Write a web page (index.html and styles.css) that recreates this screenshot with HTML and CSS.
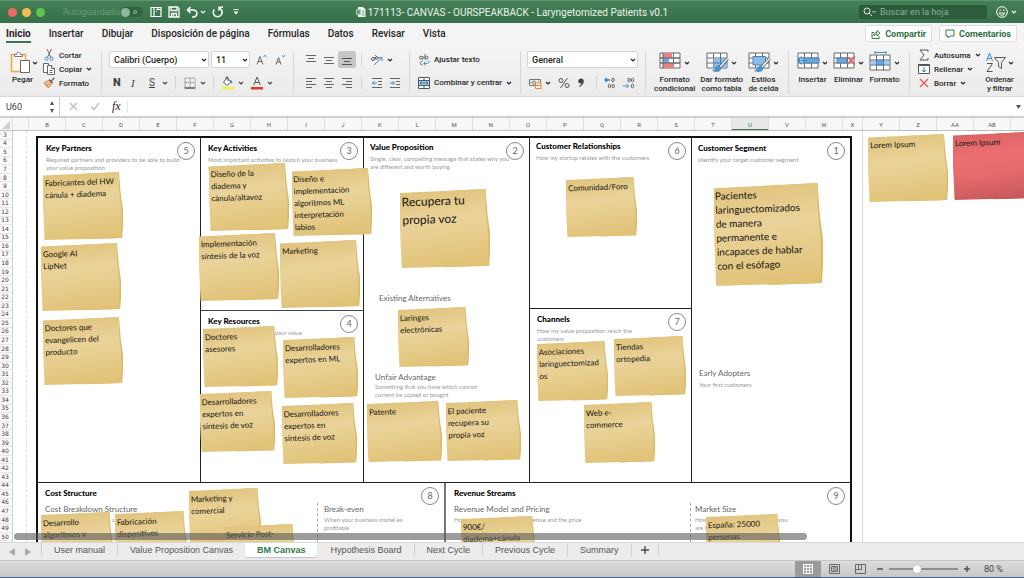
FILE: index.html
```html
<!DOCTYPE html>
<html lang="es">
<head>
<meta charset="utf-8">
<title>171113- CANVAS - OURSPEAKBACK - Laryngetomized Patients v0.1</title>
<link rel="stylesheet" href="styles.css">
</head>
<body>
<svg class="defs" aria-hidden="true">
  <symbol id="chev" viewBox="0 0 6 6"><path d="M1 2l2 2 2-2" fill="none" stroke="currentColor" stroke-width="1.2"/></symbol>
  <symbol id="grid" viewBox="0 0 24 18"><path d="M1 1h20v15H1zM1 6h20M1 11h20M7.500 1v15M14.500 1v15" fill="#fff" stroke="#6b6b6b" stroke-width="1"/></symbol>
  <symbol id="brush" viewBox="0 0 24 22"><path d="M21.500 6.500l-8 9" stroke="#555" stroke-width="3"/><path d="M21.500 6.500l-8 9" stroke="#fff" stroke-width="1.500"/><path d="M13.500 14c-3-.5-4 1-4.500 3-.3 1-1.500 1.500-2.500 1.500 3 2 8.500 1.500 8.500-2.500z" fill="#4a93cf" stroke="#2d75b3" stroke-width=".5"/></symbol>
</svg>
<div class="app">
  <header class="titlebar">
    <div class="tb-left">
      <span class="light red"></span><span class="light yellow"></span><span class="light green"></span>
      <span class="autosave">Autoguardado</span>
      <span class="toggle"><i></i><b>o</b></span>
      <button class="tb-btn" aria-label="Inicio"><svg width="12" height="12" viewBox="0 0 12 12" fill="none" stroke="#fff" stroke-width="1.200"><path d="M1 1.500h3v9H1zM4 1.500h7v9H4z"/><path d="M6 3.500h1.500M6 5.500h1M8 1.500v2h3"/></svg></button>
      <button class="tb-btn" aria-label="Guardar"><svg width="12" height="12" viewBox="0 0 12 12" fill="none" stroke="#fff" stroke-width="1.300"><path d="M1 1h8.500l1.500 1.500V11H1z"/><path d="M3 1v3.500h6V1M3.500 11V7.500h5V11M5.500 8.500v2"/></svg></button>
      <button class="tb-btn undo" aria-label="Deshacer"><svg width="12" height="12" viewBox="0 0 12 12" fill="none" stroke="#fff" stroke-width="1.500"><path d="M4.500 1L1.500 4l3 3M1.500 4h5.500c5 0 5 6 1 7H6"/></svg><svg class="chev"><use href="#chev"/></svg></button>
      <button class="tb-btn" aria-label="Rehacer"><svg width="12" height="12" viewBox="0 0 12 12" fill="none" stroke="#fff" stroke-width="1.500"><path d="M7 4.500V1.200h4M7.200 1.500L9.500 4c2 3-1 7-4 6.700C2 10.500 0 7 2.300 3.500"/></svg></button>
      <button class="tb-btn more" aria-label="Personalizar"><svg width="8" height="8" viewBox="0 0 8 8"><path d="M1.500 1.500h5" stroke="#fff"/><path d="M1.500 3.500h5L4 6.500z" fill="#fff"/></svg></button>
    </div>
    <div class="tb-title"><svg width="10" height="12" viewBox="0 0 10 12"><path d="M2 1h5l2.500 2.500V11H2z" fill="#f4f7f4"/><path d="M0 3h5v6H0z" fill="#a9cbb3"/><path d="M1.200 4.300l2.500 3.400M3.700 4.300L1.200 7.700" stroke="#2e6b42"/><path d="M6 5h2.500M6 7h2.500M6 9h2.500" stroke="#6e9e7d"/></svg><span>171113- CANVAS - OURSPEAKBACK - Laryngetomized Patients v0.1</span></div>
    <div class="tb-right">
      <label class="search"><svg width="14" height="10" viewBox="0 0 14 10" fill="none" stroke="#dfeae2"><circle cx="4" cy="4" r="3"/><path d="M6.200 6.200L9 9M9.500 4l1.500 1.500L12.500 4"/></svg><input type="text" placeholder="Buscar en la hoja" aria-label="Buscar en la hoja"></label>
      <button class="smiley" aria-label="Comentarios"><svg width="12" height="12" viewBox="0 0 12 12" fill="none" stroke="#fff"><circle cx="6" cy="6" r="5.300"/><path d="M3 7c1 3 5 3 6 0z"/><path d="M4.200 3.500v1.500M7.800 3.500v1.500"/></svg><svg class="chev"><use href="#chev"/></svg></button>
    </div>
  </header>

  <nav class="tabs">
    <a href="#" class="active">Inicio</a><a href="#">Insertar</a><a href="#">Dibujar</a><a href="#">Disposición de página</a><a href="#">Fórmulas</a><a href="#">Datos</a><a href="#">Revisar</a><a href="#">Vista</a>
    <div class="share">
      <button><svg width="10" height="10" viewBox="0 0 10 10" fill="none" stroke="#2f7a4b"><path d="M3 3.500H1v6h7V7M2.800 7c0-2.500 1.200-3.500 3.200-3.500V1.500L9 4.200 6 7V5c-1.500 0-2.500.5-3.200 2z"/></svg>Compartir</button>
      <button><svg width="10" height="10" viewBox="0 0 10 10" fill="none" stroke="#2f7a4b"><path d="M1 1h8v6H5L3 9V7H1z"/></svg>Comentarios</button>
    </div>
  </nav>

  <div class="ribbon">
    <section class="group clip">
      <button class="paste"><span class="paste-ico"><svg width="20" height="23" viewBox="0 0 20 23"><path d="M1.500 3.500h14v17h-14z" fill="#fdf6ea" stroke="#e9a94f" stroke-width="1.600"/><path d="M4.500 5.500v-2h2c0-3 4-3 4 0h2v2z" fill="#fff" stroke="#777"/><path d="M10.500 9.500h9v12h-9z" fill="#fff" stroke="#666"/></svg><svg class="chev"><use href="#chev"/></svg></span><span>Pegar</span></button>
      <div class="stack">
        <button><svg width="12" height="12" viewBox="0 0 12 12" fill="none"><path d="M4 0l4 8.500M8.500 0l-4 8.500" stroke="#666"/><circle cx="3.500" cy="9.700" r="1.600" stroke="#3c8dcc"/><circle cx="8.500" cy="9.700" r="1.600" stroke="#3c8dcc"/></svg>Cortar</button>
        <button><svg width="12" height="12" viewBox="0 0 12 12" fill="#fff" stroke="#666"><path d="M.5.500h5v9h-5z"/><path d="M4.500 2.500h4l3 3v6h-7z"/><path d="M8.500 2.500v3h3M6.500 7.500h3M6.500 9.500h3"/></svg>Copiar<svg class="chev"><use href="#chev"/></svg></button>
        <button><svg width="12" height="12" viewBox="0 0 12 12" fill="none"><path d="M11.500.8L8.300 4M6 2.500L9.800 6.300" stroke="#666" stroke-width="1.500"/><path d="M5.500 3.500L.8 6l4.700 5 3-4.500z" fill="#f6c9a0" stroke="#d9803a"/><path d="M3 7l2 2M4.500 6l2.500 2.500" stroke="#d9803a"/></svg>Formato</button>
      </div>
    </section>
    <section class="group rows font">
      <div class="row">
        <span class="sel face"><select aria-label="Fuente"><option>Calibri (Cuerpo)</option></select><svg class="chev"><use href="#chev"/></svg></span>
        <span class="sel size"><select aria-label="Tamaño"><option>11</option></select><svg class="chev"><use href="#chev"/></svg></span>
        <button class="ic grow" aria-label="Aumentar"><svg width="12" height="12" viewBox="0 0 12 12" fill="none"><path d="M1 10.500l3-8 3 8M2 7.500h4" stroke="#666"/><path d="M7.500 3L9 1.200 10.500 3" stroke="#3c8dcc"/></svg></button>
        <button class="ic grow" aria-label="Reducir"><svg width="12" height="12" viewBox="0 0 12 12" fill="none"><path d="M1 10.500l2.500-7 2.500 7M2 8h3" stroke="#666"/><path d="M7 1.200L8.500 3 10 1.200" stroke="#3c8dcc"/></svg></button>
      </div>
      <div class="row fmt">
        <button class="bold">N</button><button class="ital">I</button><button class="under"><u>S</u><svg class="chev"><use href="#chev"/></svg></button><i class="vr"></i>
        <button><svg width="12" height="12" viewBox="0 0 12 12" fill="none" stroke="#888"><path d="M1 1h10v9M1 1v9M6 1v10M1 5.500h10" stroke-dasharray="1.500 1"/><path d="M.5 11h11" stroke="#444" stroke-width="1.300"/></svg><svg class="chev"><use href="#chev"/></svg></button><i class="vr"></i>
        <button><svg width="12" height="14" viewBox="0 0 12 14" fill="none"><path d="M5 2L1.500 6 5 9.500 9 5.800z" fill="#fff" stroke="#555"/><path d="M4 3V1.500c0-1 2-1 2 0V5" stroke="#555"/><path d="M8 4c2 0 2.500 1.500 2.200 4L8.500 6z" fill="#3c8dcc"/><path d="M0 11h12v2.500H0z" fill="#f9ee3c"/></svg><svg class="chev"><use href="#chev"/></svg></button>
        <button><svg width="12" height="14" viewBox="0 0 12 14" fill="none"><path d="M2.700 9L6 1l3.300 8M4 6.500h4" stroke="#555"/><path d="M0 11h12v2.500H0z" fill="#e6352b"/></svg><svg class="chev"><use href="#chev"/></svg></button>
      </div>
    </section>
    <section class="group rows align">
      <div class="row">
        <button aria-label="Arriba"><svg width="12" height="12" viewBox="0 0 12 12" stroke="#666"><path d="M1 1.500h10M3 4.500h6M1 7.500h10"/></svg></button>
        <button aria-label="Centro"><svg width="12" height="12" viewBox="0 0 12 12" stroke="#666"><path d="M1 3.500h10M3 6.500h6M1 9.500h10"/></svg></button>
        <button class="on" aria-label="Abajo"><svg width="12" height="12" viewBox="0 0 12 12" stroke="#555"><path d="M1 4.500h10M3 7.500h6M1 10.500h10"/></svg></button>
        <i class="vr"></i>
        <button class="wide" aria-label="Orientación"><svg width="13" height="12" viewBox="0 0 13 12" fill="none"><circle cx="3" cy="5" r="1.500" stroke="#666"/><path d="M4 3l2 2.500M5 .8l3.500 4" stroke="#666"/><circle cx="6.700" cy="4" r="1.300" stroke="#666"/><path d="M4 11l7.500-7M8.500 3.500h3.500V7" stroke="#3c8dcc"/></svg><svg class="chev"><use href="#chev"/></svg></button>
      </div>
      <div class="row">
        <button aria-label="Izquierda"><svg width="12" height="12" viewBox="0 0 12 12" stroke="#666"><path d="M1 1.500h10M1 4.500h6M1 7.500h10M1 10.500h6"/></svg></button>
        <button aria-label="Centrar"><svg width="12" height="12" viewBox="0 0 12 12" stroke="#666"><path d="M1 1.500h10M3 4.500h6M1 7.500h10M3 10.500h6"/></svg></button>
        <button aria-label="Derecha"><svg width="12" height="12" viewBox="0 0 12 12" stroke="#666"><path d="M1 1.500h10M5 4.500h6M1 7.500h10M5 10.500h6"/></svg></button>
        <i class="vr"></i>
        <button aria-label="Disminuir sangría"><svg width="12" height="12" viewBox="0 0 12 12" fill="none" stroke="#666"><path d="M1 1.500h10M7 4.500h4M7 7.500h4M1 10.500h10"/><path d="M6 6H1.500M3.500 4l-2 2 2 2" stroke="#3c8dcc"/></svg></button>
        <button aria-label="Aumentar sangría"><svg width="12" height="12" viewBox="0 0 12 12" fill="none" stroke="#666"><path d="M1 1.500h10M7 4.500h4M7 7.500h4M1 10.500h10"/><path d="M1 6h4.500M3.500 4l2 2-2 2" stroke="#3c8dcc"/></svg></button>
      </div>
    </section>
    <section class="group rows wrap">
      <div class="row"><button><svg width="12" height="12" viewBox="0 0 12 12" fill="none" stroke="#666"><circle cx="3" cy="3.700" r="1.500"/><path d="M5 2v3.500M7 0v5.500M4.500 7.500c-3-.5-3 4 0 3.500"/><circle cx="8.500" cy="3.700" r="1.500"/><path d="M11 6.500c.5 3-1.500 3-5 3M7.500 7.500L5.800 9.500l1.700 2" stroke="#3c8dcc"/></svg>Ajustar texto</button></div>
      <div class="row"><button><svg width="12" height="12" viewBox="0 0 12 12" fill="none"><path d="M.5.500h11v11H.5z" fill="#fff" stroke="#555"/><path d="M.5 3.500h11M.5 8.500h11M6 .5v3M6 8.500v3" stroke="#555"/><path d="M1 4h10v4H1z" fill="#a9d0f0"/><path d="M2 6h8M3.500 4.500L2 6l1.500 1.500M8.500 4.500L10 6 8.500 7.500" stroke="#2573b5"/></svg>Combinar y centrar<svg class="chev"><use href="#chev"/></svg></button></div>
    </section>
    <section class="group rows num">
      <div class="row"><span class="sel general"><select aria-label="Formato de número"><option>General</option></select><svg class="chev"><use href="#chev"/></svg></span></div>
      <div class="row nums">
        <button><svg width="13" height="12" viewBox="0 0 13 12" fill="none"><path d="M.5 2.500h11v6H.5z" stroke="#777"/><circle cx="5" cy="5.500" r="1.500" stroke="#777"/><path d="M2 4.500v2M9.500 3.500v1" stroke="#777"/><path d="M6.500 6h5.500v5.500H6.500zM6.500 8.500h5.500" fill="#fff3e6" stroke="#e08a3c"/></svg><svg class="chev"><use href="#chev"/></svg></button>
        <button><svg width="12" height="12" viewBox="0 0 12 12" fill="none" stroke="#555"><circle cx="3" cy="3.500" r="2"/><circle cx="9" cy="8.500" r="2"/><path d="M9.500 1l-7 10"/></svg></button>
        <button><svg width="8" height="12" viewBox="0 0 8 12"><path d="M4 1.500c4 0 4 6-1.500 8.500l-.5-.8C4 8 4.500 7.200 4.300 6.500 0 7 .500 1.500 4 1.500z" fill="#444"/></svg></button>
        <i class="vr"></i>
        <button><svg width="12" height="12" viewBox="0 0 12 12" fill="none"><path d="M6 3H1M3 1L1 3l2 2" stroke="#2f80c4" stroke-width="1.300"/><g stroke="#666"><ellipse cx="9" cy="3" rx="1.200" ry="1.800"/><ellipse cx="5.500" cy="9" rx="1.200" ry="1.800"/><ellipse cx="9.200" cy="9" rx="1.200" ry="1.800"/></g></svg></button>
        <button><svg width="12" height="12" viewBox="0 0 12 12" fill="none"><path d="M0 9h5M3.500 7l2 2-2 2" stroke="#3c8dcc"/><g stroke="#666"><ellipse cx="6" cy="3" rx="1.200" ry="1.800"/><ellipse cx="9.500" cy="3" rx="1.200" ry="1.800"/><ellipse cx="9.500" cy="9" rx="1.200" ry="1.800"/></g></svg></button>
      </div>
    </section>
    <section class="group bigs styles">
      <button class="big"><span><svg width="24" height="22" viewBox="0 0 24 22"><use href="#grid" width="24" height="18"/><path d="M4 1h9v5H4z" fill="#ef7f7f"/><path d="M4 6h6v5H4z" fill="#6ea8dc"/><path d="M4 11h11v5H4z" fill="#ef7f7f"/><path d="M4 1v15M1 6h20M1 11h20" stroke="#666"/></svg><svg class="chev"><use href="#chev"/></svg></span>Formato<br>condicional</button>
      <button class="big"><span><svg width="24" height="22" viewBox="0 0 24 22"><use href="#grid" width="24" height="18"/><path d="M7.500 6H21v10H7.500z" fill="#8dbde8"/><path d="M7.500 11H21M14.500 6v10" stroke="#4b83b5"/><use href="#brush" width="24" height="22"/></svg><svg class="chev"><use href="#chev"/></svg></span>Dar formato<br>como tabla</button>
      <button class="big"><span><svg width="24" height="22" viewBox="0 0 24 22"><use href="#grid" width="24" height="18"/><path d="M5 4.500h12.500v8.500H5z" fill="#8dbde8" stroke="#4b83b5"/><use href="#brush" width="24" height="22"/></svg><svg class="chev"><use href="#chev"/></svg></span>Estilos<br>de celda</button>
    </section>
    <section class="group bigs cells">
      <button class="big"><span><svg width="24" height="22" viewBox="0 0 24 22"><use href="#grid" width="24" height="18"/><path d="M6 6h16v5H6z" fill="#6aa7de" stroke="#4b83b5"/><path d="M10 8.500H1M5 4.500l-4 4 4 4" fill="none" stroke="#3c8dcc" stroke-width="1.300"/></svg><svg class="chev"><use href="#chev"/></svg></span>Insertar</button>
      <button class="big"><span><svg width="24" height="22" viewBox="0 0 24 22"><use href="#grid" width="24" height="18"/><path d="M4 6h10v5H4z" fill="#6aa7de" stroke="#4b83b5"/><path d="M14 4.500l8 8M22 4.500l-8 8" stroke="#e2574f" stroke-width="1.400"/></svg><svg class="chev"><use href="#chev"/></svg></span>Eliminar</button>
      <button class="big"><span><svg class="tall" width="24" height="24" viewBox="0 -3 24 24"><use href="#grid" width="24" height="18"/><path d="M2 6h18v5H2z" fill="#6aa7de" opacity=".6"/><path d="M7.500 6h7v5h-7z" fill="#6aa7de" stroke="#4b83b5"/><path d="M6 -1.500h11M6 -3v3M17 -3v3" stroke="#3c8dcc"/></svg><svg class="chev"><use href="#chev"/></svg></span>Formato</button>
    </section>
    <section class="group edit">
      <div class="stack">
        <button><svg width="12" height="12" viewBox="0 0 12 12" fill="none" stroke="#555"><path d="M10 3V1H2l4 5-4 5h8V9"/></svg>Autosuma<svg class="chev"><use href="#chev"/></svg></button>
        <button><svg width="12" height="12" viewBox="0 0 12 12" fill="none"><path d="M.5 1.500h11v9H.5z" fill="#fff" stroke="#555"/><path d="M.5 2.500h11" stroke="#555"/><path d="M6 4v5M4 7l2 2 2-2" stroke="#2f80c4"/></svg>Rellenar<svg class="chev"><use href="#chev"/></svg></button>
        <button><svg width="12" height="12" viewBox="0 0 12 12"><path d="M2 2l8 8M10 2l-8 8" stroke="#e2574f" stroke-width="1.200"/></svg>Borrar<svg class="chev"><use href="#chev"/></svg></button>
      </div>
      <button class="big sort"><span><svg width="22" height="22" viewBox="0 0 22 22" fill="none"><path d="M1.500 9l3-8 3 8M2.500 6.500h4" stroke="#3c8dcc"/><path d="M2 11.500h5.500l-5.500 8h5.500" stroke="#555"/><path d="M9.500 5.500h11l-4 5v6l-3-2v-4z" stroke="#555"/></svg><svg class="chev"><use href="#chev"/></svg></span>Ordenar<br>y filtrar</button>
    </section>
  </div>

  <div class="formula">
    <div class="namebox"><input type="text" value="U60" aria-label="Cuadro de nombres"><svg width="6" height="12" viewBox="0 0 6 12" fill="#555"><path d="M3 0l2 4H1zM3 12l2-4H1z"/></svg></div>
    <button aria-label="Cancelar"><svg width="9" height="9" viewBox="0 0 9 9"><path d="M1 1l7 7M8 1L1 8" stroke="#c3c3c3" stroke-width="1.500"/></svg></button>
    <button aria-label="Aceptar"><svg width="10" height="9" viewBox="0 0 10 9" fill="none"><path d="M1 4.500l3 3L9 1" stroke="#c3c3c3" stroke-width="1.500"/></svg></button>
    <button class="fx">fx</button>
    <input class="entry" type="text" aria-label="Barra de fórmulas">
    <svg width="6" height="6" viewBox="0 0 6 6"><path d="M0 1h5L2.500 5z" fill="#555"/></svg>
  </div>

  <div class="cols"><span class="corner"><svg width="10" height="11" viewBox="0 0 10 11"><path d="M9 2v8H1z" fill="#d0d0d0"/></svg></span><span class="a"></span><span>B</span><span>C</span><span>D</span><span>E</span><span>F</span><span>G</span><span>H</span><span>I</span><span>J</span><span>K</span><span>L</span><span>M</span><span>N</span><span>O</span><span>P</span><span>Q</span><span>R</span><span>S</span><span>T</span><span class="cur">U</span><span>V</span><span>W</span><span class="x">X</span><span>Y</span><span>Z</span><span>AA</span><span>AB</span><span></span></div>

  <main class="work">
    <div class="rownums"><span>3</span><span>4</span><span>5</span><span>6</span><span>7</span><span>8</span><span>9</span><span>10</span><span>11</span><span>12</span><span>13</span><span>14</span><span>15</span><span>16</span><span>17</span><span>18</span><span>19</span><span>20</span><span>21</span><span>22</span><span>23</span><span>24</span><span>25</span><span>26</span><span>27</span><span>28</span><span>29</span><span>30</span><span>31</span><span>32</span><span>33</span><span>34</span><span>35</span><span>36</span><span>37</span><span>38</span><span>39</span><span>40</span><span>41</span><span>42</span><span>43</span><span>44</span><span>45</span><span>46</span><span>47</span><span>48</span><span>49</span><span>50</span><span>51</span></div>
    <div class="sheet">
      <div class="printarea">
        <div class="board">
          <div class="top">
            <div class="col"><section class="cell"><h2>Key Partners</h2><p>Required partners and providers to be able to build<br>your value proposition</p><b class="no">5</b></section></div>
            <div class="col"><section class="cell ka"><h2>Key Activities</h2><p>Most important activities to launch your business<br>model</p><b class="no">3</b></section><section class="cell kr"><h2>Key Resources</h2><p>What you need to create your value</p><b class="no">4</b></section></div>
            <div class="col"><section class="cell vp"><h2>Value Proposition</h2><p>Single, clear, compelling message that states why you<br>are different and worth buying</p><b class="no">2</b>
              <div class="sub alt"><h3>Existing Alternatives</h3></div>
              <div class="sub unfair"><h3>Unfair Advantage</h3><p>Something that you have which cannot<br>current be copied or bought</p></div></section></div>
            <div class="col"><section class="cell cr"><h2>Customer Relationships</h2><p>How my startup relates with the customers</p><b class="no">6</b></section><section class="cell ch"><h2>Channels</h2><p>How my value proposition reach the<br>customers</p><b class="no">7</b></section></div>
            <div class="col"><section class="cell cs"><h2>Customer Segment</h2><p>Identify your target customer segment</p><b class="no">1</b>
              <div class="sub early"><h3>Early Adopters</h3><p>Your first customers</p></div></section></div>
          </div>
          <div class="bottom">
            <section class="cell cost"><h2>Cost Structure</h2><b class="no">8</b>
              <div class="halves"><div><h3>Cost Breakdown Structure</h3><p>List your costs to run the company</p></div><div class="dash"><h3>Break-even</h3><p>When your business model es<br>profitable</p></div></div></section>
            <section class="cell rev"><h2>Revenue Streams</h2><b class="no">9</b>
              <div class="halves"><div><h3>Revenue Model and Pricing</h3><p>How you will generate the revenue and the price</p></div><div class="dash"><h3>Market Size</h3><p>How big is the market segment you<br>are targeting</p></div></div></section>
          </div>
        </div>
      </div>

      <div class="note n1"><p>Fabricantes del HW<br>cánula + diadema</p></div>
      <div class="note n2"><p>Google AI<br>LipNet</p></div>
      <div class="note n3"><p>Doctores que<br>evangelicen del<br>producto</p></div>
      <div class="note n4"><p>Diseño de la<br>diadema y<br>cánula/altavoz</p></div>
      <div class="note n5"><p>Diseño e<br>implementación<br>algoritmos ML<br>interpretación<br>labios</p></div>
      <div class="note n6"><p>Implementación<br>síntesis de la voz</p></div>
      <div class="note n7"><p>Marketing</p></div>
      <div class="note n8 large"><p>Recupera tu<br>propia voz</p></div>
      <div class="note n9"><p>Comunidad/Foro</p></div>
      <div class="note n10 medium"><p>Pacientes<br>laringuectomizados<br>de manera<br>permanente e<br>incapaces de hablar<br>con el esófago</p></div>
      <div class="note n11"><p>Lorem Ipsum</p></div>
      <div class="note n12 coral"><p>Lorem Ipsum</p></div>
      <div class="note n13"><p>Laringes<br>electrónicas</p></div>
      <div class="note n14"><p>Doctores<br>asesores</p></div>
      <div class="note n15"><p>Desarrolladores<br>expertos en ML</p></div>
      <div class="note n16"><p>Desarrolladores<br>expertos en<br>síntesis de voz</p></div>
      <div class="note n17"><p>Desarrolladores<br>expertos en<br>síntesis de voz</p></div>
      <div class="note n18"><p>Patente</p></div>
      <div class="note n19"><p>El paciente<br>recupera su<br>propia voz</p></div>
      <div class="note n20"><p>Asociaciones<br>laringuectomizad<br>os</p></div>
      <div class="note n21"><p>Tiendas<br>ortopedia</p></div>
      <div class="note n22"><p>Web e-<br>commerce</p></div>
      <div class="note n23"><p>Desarrollo<br>algoritmos y</p></div>
      <div class="note n24"><p>Fabricación<br>dispositivos</p></div>
      <div class="note n25"><p>Marketing y<br>comercial</p></div>
      <div class="note n26"><p>Servicio Post-</p></div>
      <div class="note n27"><p>900€/<br>diadema+cánula</p></div>
      <div class="note n28"><p>España: 25000<br>personas</p></div>
      <div class="scroll"></div>
    </div>
  </main>

  <nav class="sheets">
    <span class="arrows"><svg width="6" height="8" viewBox="0 0 6 8"><path d="M6 0v8L0 4z" fill="#aaa"/></svg><svg width="6" height="8" viewBox="0 0 6 8"><path d="M0 0v8l6-4z" fill="#aaa"/></svg></span>
    <button>User manual</button><button>Value Proposition Canvas</button><button class="active">BM Canvas</button><button>Hypothesis Board</button><button>Next Cycle</button><button>Previous Cycle</button><button>Summary</button><button class="add" aria-label="Agregar hoja"><svg width="8" height="8" viewBox="0 0 8 8"><path d="M4 0v8M0 4h8" stroke="#444" stroke-width="1.300"/></svg></button>
  </nav>
  <footer class="status">
    <button class="on" aria-label="Normal"><svg width="10" height="10" viewBox="0 0 10 10" fill="none" stroke="#fff"><path d="M.5.500h9v9h-9zM3.500.500v9M6.500.500v9M.5 3.500h9M.5 6.500h9"/></svg></button>
    <button aria-label="Diseño de página"><svg width="11" height="10" viewBox="0 0 11 10" fill="none" stroke="#666"><path d="M.5.500h10v9H.5zM2.500 2.500h6v5h-6zM3.500 4h4M3.500 6h4"/></svg></button>
    <button aria-label="Salto de página"><svg width="11" height="10" viewBox="0 0 11 10" fill="none" stroke="#666"><path d="M.5.500h10v9H.5zM3.500.500v5M6.500.500v5M.5 5.500h6"/></svg></button>
    <svg class="minus" width="6" height="8" viewBox="0 0 6 8"><path d="M0 4h6" stroke="#555" stroke-width="1.500"/></svg>
    <input type="range" min="0" max="100" value="40" aria-label="Zoom">
    <svg class="plus" width="6" height="8" viewBox="0 0 6 8"><path d="M0 4h6M3 1v6" stroke="#555" stroke-width="1.500"/></svg>
    <span class="pct">80 %</span>
  </footer>
</div>
</body>
</html>
```
FILE: styles.css
```css
* { box-sizing: border-box; }
html, body { margin: 0; height: 100%; }
body { font-family: Roboto, "Liberation Sans", sans-serif; color: #262626; background: #3c5f8c; overflow: hidden; }
h2, h3, p { margin: 0; }
button { font: inherit; color: inherit; background: none; border: 0; padding: 0; margin: 0; display: flex; align-items: center; }
svg { display: block; flex: none; }
a { color: inherit; text-decoration: none; }
.defs { position: absolute; width: 0; height: 0; }
.chev { width: 6px; height: 6px; }
.app { display: flex; flex-direction: column; height: calc(100vh - 1px); background: #fff; }

/* title bar */
.titlebar { flex: none; height: 23px; display: grid; grid-template-columns: 1fr auto 1fr; align-items: center; background: linear-gradient(#447f56, #36704a); border-top: 1px solid #5d9470; color: #fff; }
.tb-left { display: flex; align-items: center; padding-left: 8px; }
.light { width: 9px; height: 9px; border-radius: 50%; margin-right: 5px; }
.red { background: #ee6a5f; }
.yellow { background: #f5bd4f; }
.green { background: #61c455; }
.autosave { font-size: 9px; color: #6a9a78; margin-left: 13px; width: 58px; }
.toggle { width: 22px; height: 10px; border-radius: 5px; background: #2f6341; display: flex; align-items: center; gap: 3px; font-size: 7px; color: #a6c4af; margin-right: 7px; }
.toggle i { width: 9px; height: 9px; border-radius: 50%; background: #92b59d; }
.toggle b { font-weight: 500; line-height: 8px; }
.tb-btn { margin-right: 6px; gap: 2px; }
.tb-btn.more { margin-left: 2px; }
.tb-title { display: flex; align-items: center; gap: 2px; font-size: 10px; color: #e9f1eb; white-space: nowrap; }
.tb-right { display: flex; align-items: center; justify-content: flex-end; padding-right: 7px; gap: 9px; }
.search { display: flex; align-items: center; gap: 3px; width: 128px; height: 14px; padding-left: 4px; border-radius: 2px; background: #2c5c3c; }
.search input { flex: 1; min-width: 0; border: 0; padding: 0; background: none; font: 9px Roboto, sans-serif; color: #fff; }
.search input::placeholder { color: #8fb19a; opacity: 1; }
.smiley { gap: 3px; }

/* ribbon tabs */
.tabs { flex: none; height: 24px; display: flex; align-items: stretch; gap: 18px; padding: 2px 7px 2px 6px; background: #f5f4f4; font-size: 10px; font-weight: 500; }
.tabs a { display: flex; align-items: center; height: 18px; border-bottom: 2px solid transparent; white-space: nowrap; }
.tabs a.active { font-weight: 700; border-color: #3a7650; }
.share { margin-left: auto; display: flex; gap: 7px; height: 17px; }
.share button { gap: 4px; padding: 0 5px; background: #fff; border: 1px solid #dedede; border-radius: 2px; font-size: 9px; font-weight: 700; color: #2f7046; }

/* ribbon */
.ribbon { flex: none; height: 50px; display: grid; grid-template-columns: 102px 192px 116px 111px 125px 143px 121px 1fr; background: linear-gradient(#f5f4f4, #ebebeb); border-bottom: 1px solid #d8d8d8; font-size: 8px; font-weight: 500; white-space: nowrap; }
.group { position: relative; display: flex; }
.group:not(:last-child)::after { content: ""; position: absolute; right: 0; top: 4px; bottom: 3px; width: 1px; background: #d6d6d6; }
.rows { flex-direction: column; gap: 6px; padding-top: 4px; }
.row { display: flex; align-items: center; height: 17px; }
.vr { width: 1px; height: 13px; background: #d2d2d2; }
.stack { display: flex; flex-direction: column; }
.stack button { height: 14px; gap: 4px; }
.clip { padding: 1px 0 0 10px; gap: 5px; }
.paste { flex-direction: column; align-items: flex-start; width: 28px; padding-top: 3px; gap: 1px; }
.paste > span:last-child { margin-left: 2px; }
.paste-ico { display: flex; align-items: center; gap: 2px; }
.sel { position: relative; display: block; height: 17px; }
.sel select { appearance: none; width: 100%; height: 17px; padding: 0 4px; border: 1px solid #d4d4d4; border-radius: 2px; background: #fff; font: 500 9px Roboto, sans-serif; color: #262626; }
.sel .chev { position: absolute; right: 2px; top: 6px; }
.font { padding-left: 7px; }
.face { width: 100px; }
.size { width: 39px; margin: 0 6px 0 2px; }
.grow { margin-right: 7px; }
.fmt { padding-left: 4px; color: #444; }
.fmt button { gap: 4px; }
.bold { font-size: 11px; font-weight: 900; width: 18px; }
.ital { font-family: "Liberation Serif", serif; font-style: italic; font-size: 11px; width: 18px; }
.under { font-size: 10px; font-weight: 400; width: 26px; }
.under .chev { margin-left: 3px; }
.fmt .vr { margin-right: 8px; }
.fmt button:nth-of-type(n+4) { margin-right: 7px; }
.align { padding-left: 8px; }
.align button { width: 18px; height: 17px; justify-content: center; }
.align .on { background: #c6c6c6; border-radius: 2px; }
.align .vr { margin: 0 6px 0 5px; }
.align .wide { width: 26px; gap: 4px; }
.wrap { padding-left: 8px; }
.wrap button { gap: 4px; }
.num { padding-left: 6px; }
.general { width: 111px; }
.nums { padding-left: 2px; gap: 7px; }
.nums button { gap: 3px; }
.nums .vr { margin-left: 4px; }
.bigs { padding-top: 4px; }
.big { flex-direction: column; line-height: 9px; text-align: center; }
.big span { display: flex; align-items: center; gap: 1px; height: 24px; }
.styles { justify-content: space-between; padding-left: 8px; padding-right: 10px; }
.cells { gap: 5px; padding-left: 8px; }
.edit { justify-content: space-between; padding: 1px 10px 0 8px; }
.sort { padding-top: 3px; }

/* formula bar */
.formula { flex: none; height: 21px; display: flex; align-items: center; background: #fff; border-bottom: 2px solid #cfcfcf; padding-right: 2px; }
.namebox { width: 60px; height: 19px; display: flex; align-items: center; border-right: 1px solid #cbcbcb; padding: 0 4px 0 6px; margin-right: 9px; }
.namebox input { flex: 1; min-width: 0; border: 0; padding: 0; font: 9px Roboto, sans-serif; color: #444; }
.formula button { margin-right: 12px; }
.formula .fx { font: italic 12px "Liberation Serif", serif; margin: 0 6px 0 0; }
.entry { flex: 1; border: 0; border-left: 1px solid #e6e6e6; height: 12px; padding: 0; }

/* column headings */
.cols { flex: none; height: 13px; display: flex; overflow: hidden; background: #f8f8f8; border-bottom: 1px solid #bdbdbd; font-size: 6px; color: #555; }
.cols span { flex: none; width: 37px; border-right: 1px solid #dedede; display: flex; align-items: center; justify-content: center; }
.cols .corner { width: 13px; }
.cols .a { width: 16px; }
.cols .x { width: 20px; }
.cols .cur { background: #e8e8e8; color: #2f7046; box-shadow: inset 0 -1px #3a7650; }

/* work area */
.work { flex: 1; min-height: 0; display: flex; overflow: hidden; }
.rownums { flex: none; width: 13px; height: 419px; display: grid; grid-auto-rows: 1fr; background: #fafafa; border-right: 1px solid #cfcfcf; font: 6px "DejaVu Sans", sans-serif; color: #444; text-align: center; }
.rownums span { display: flex; align-items: center; justify-content: center; padding-right: 2px; border-bottom: 1px solid #e6e6e6; overflow: hidden; line-height: 6px; }
.sheet { flex: 1; min-width: 0; position: relative; overflow: hidden; font-family: Lato, "Open Sans", sans-serif; }
.printarea { width: 850px; height: 100%; padding: 5px 0 0 10px; border-right: 1px solid #dcdcdc; }
.printarea::before { content: ""; position: absolute; left: 13px; top: 0; bottom: 0; border-left: 1px dashed #dedede; }
.board { width: 816px; margin-left: 13px; border: 2px solid #111; background: #fff; }
.top { display: grid; grid-template-columns: 162px 163px 166px 162px 1fr; height: 344px; }
.col { display: flex; flex-direction: column; }
.col + .col { border-left: 1px solid #222; }
.cell { position: relative; flex: 1; padding: 4px 8px; }
.cell h2 { font-size: 8px; line-height: 12px; font-weight: 900; color: #000; white-space: nowrap; }
.cell p { font-size: 6px; line-height: 8px; color: #999; white-space: nowrap; margin-top: 2px; }
.cell h3 { font-size: 8px; line-height: 12px; font-weight: 400; color: #666; white-space: nowrap; }
.no { position: absolute; right: 5px; top: 4px; width: 18px; height: 18px; border: 1px solid #888; border-radius: 50%; font-size: 9px; line-height: 16px; font-weight: 400; color: #666; text-align: center; }
.ka { flex: none; height: 172px; padding-left: 7px; }
.kr { border-top: 1px solid #444; padding-left: 7px; }
.vp { padding: 3px 6px; }
.cr { flex: none; height: 170px; padding: 2px 6px; }
.ch { border-top: 1px solid #222; padding-left: 7px; }
.cs { padding-left: 6px; }
.sub { position: absolute; }
.alt { left: 15px; top: 154px; }
.unfair { left: 11px; top: 233px; }
.unfair p { margin-top: 0; }
.early { left: 7px; top: 229px; }
.bottom { display: grid; grid-template-columns: 406px 1fr; height: 84px; border-top: 1px solid #222; }
.cost { padding-left: 7px; }
.rev { border-left: 2px solid #777; padding-left: 8px; }
.halves { display: grid; grid-template-columns: 272px 1fr; margin-top: 4px; }
.rev .halves { grid-template-columns: 236px 1fr; }
.cell .halves p { margin-top: 1px; }
.dash { border-left: 1px dashed #aaa; height: 50px; padding-left: 6px; }
.rev .dash { padding-left: 4px; }

/* sticky notes */
.note { position: absolute; width: 80px; height: 68px; padding: 4px 2px; }
.note::before, .note::after { content: ""; position: absolute; inset: 0; }
.note::before { background: #dcb964; clip-path: polygon(50% 3%, 95% 0, 97% 30%, 100% 55%, 100% 80%, 99% 97%, 50% 99%); }
.note::after { background: linear-gradient(172deg, #dfc27b 2%, #e6cc8c 25%, #ead39a 40%, #e5ca86 70%, #dfbf72); clip-path: polygon(0 5%, 95% 0, 95% 25%, 98% 55%, 98% 97%, 2% 100%, 0 50%); }
.note p { position: relative; z-index: 1; font-size: 8px; line-height: 12px; color: #111; white-space: nowrap; transform: rotate(-2deg); }
.large { width: 90px; height: 79px; padding-top: 3px; }
.large p { font-size: 12px; line-height: 18px; }
.medium { width: 109px; height: 103px; padding-top: 4px; }
.medium p { font-size: 10px; line-height: 14px; }
.coral::before { background: #c9494b; }
.coral::after { background: linear-gradient(172deg, #d95f62, #ec7070 35%, #e56a6b 60%, #c25558); }
.n1 { left: 30px; top: 41px; }
.n2 { left: 28px; top: 112px; }
.n3 { left: 30px; top: 186px; }
.n4 { left: 196px; top: 32px; }
.n5 { left: 279px; top: 37px; }
.n6 { left: 186px; top: 102px; }
.n7 { left: 267px; top: 109px; }
.n8 { left: 387px; top: 58px; }
.n9 { left: 553px; top: 46px; width: 71px; height: 60px; }
.n10 { left: 701px; top: 52px; }
.n11 { left: 855px; top: 3px; }
.n12 { left: 940px; top: 1px; }
.n13 { left: 385px; top: 176px; width: 71px; height: 60px; }
.n14 { left: 190px; top: 195px; width: 75px; height: 61px; }
.n15 { left: 270px; top: 206px; width: 75px; height: 61px; }
.n16 { left: 187px; top: 260px; width: 75px; height: 61px; }
.n17 { left: 269px; top: 272px; width: 75px; height: 61px; }
.n18 { left: 354px; top: 270px; width: 75px; height: 61px; }
.n19 { left: 433px; top: 269px; width: 75px; height: 61px; }
.n20 { left: 524px; top: 210px; width: 71px; height: 60px; }
.n21 { left: 601px; top: 205px; width: 72px; height: 60px; }
.n22 { left: 571px; top: 271px; width: 71px; height: 61px; }
.n23 { left: 28px; top: 381px; width: 72px; height: 60px; }
.n24 { left: 102px; top: 380px; width: 72px; height: 60px; }
.n25 { left: 176px; top: 357px; width: 72px; height: 61px; }
.n26 { left: 211px; top: 393px; width: 72px; height: 60px; }
.n27 { left: 448px; top: 385px; width: 75px; height: 60px; }
.n28 { left: 693px; top: 383px; width: 75px; height: 60px; }
.scroll { position: absolute; left: 1px; bottom: 2px; width: 793px; height: 7px; border-radius: 4px; background: rgba(90, 90, 90, .6); z-index: 2; }

/* sheet tabs */
.sheets { flex: none; height: 19px; display: flex; background: #ececec; border-top: 1px solid #d8d8d8; border-bottom: 1px solid #c6c6c6; font: 9px "Liberation Sans", Arial, sans-serif; color: #555; }
.arrows { display: flex; align-items: center; gap: 10px; width: 41px; padding-left: 9px; }
.sheets button { height: 14px; padding: 0 12px; border-left: 1px solid #d0d0d0; white-space: nowrap; }
.sheets .active { background: #fff; color: #2f7a4b; font-weight: 700; border-radius: 0 0 3px 3px; box-shadow: 0 1px 1px #c4c4c4; border-left: 0; }
.sheets .active + button { border-left: 0; padding-left: 13px; }
.sheets .add { padding: 0 9px; border-right: 1px solid #d0d0d0; }

/* status bar */
.status { flex: none; height: 16px; display: flex; align-items: center; justify-content: flex-end; background: linear-gradient(#dcdcdc, #c8c8c8); padding-right: 20px; }
.status button { width: 26px; height: 16px; justify-content: center; }
.status .on { background: #9a9a9a; }
.status .minus { margin-left: 4px; }
.status input { appearance: none; width: 69px; height: 8px; margin: 0 6px; background: linear-gradient(#8f8f8f, #8f8f8f) center / 100% 2px no-repeat; }
.status input::-webkit-slider-thumb { appearance: none; width: 8px; height: 8px; border-radius: 50%; background: #fff; box-shadow: 0 0 1px #666; }
.pct { font-size: 9px; color: #444; margin-left: 14px; width: 20px; white-space: nowrap; }
```
